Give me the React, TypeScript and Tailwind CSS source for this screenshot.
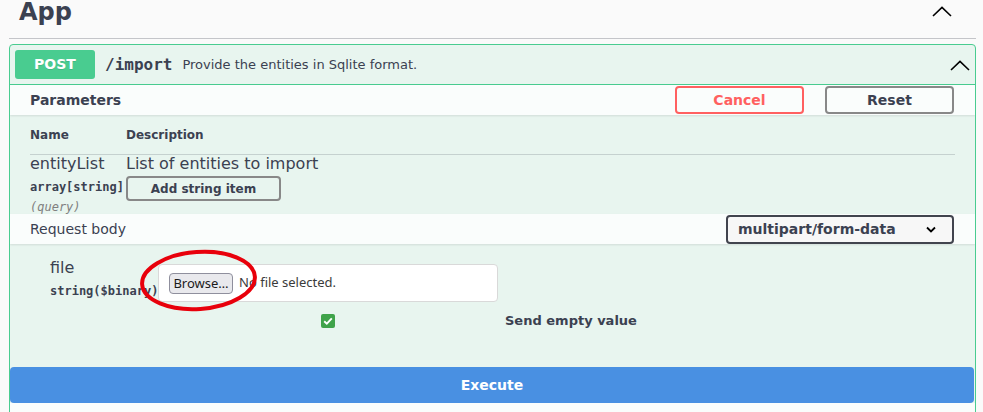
import React from "react";

const Chevron = ({ className = "" }: { className?: string }) => (
  <svg width="20" height="11" viewBox="0 0 20 11" className={className}>
    <polyline points="1,10 10,1.3 19,10" fill="none" stroke="#000" strokeWidth="1.6" />
  </svg>
);

export default function App() {
  return (
    <div className="relative h-[412px] overflow-hidden bg-[#fafafa] font-['DejaVu_Sans',sans-serif] text-[#3b4151]">
      <div className="ml-[9px] w-[967px] flex flex-col">
        {/* Tag header */}
        <div className="h-[39px] border-b border-[#c4c5c9] flex items-start pl-[10px] pr-[24px]">
          <div className="text-[24px] leading-[24px] font-bold">App</div>
          <Chevron className="ml-auto mt-[6px]" />
        </div>

        {/* Opblock */}
        <div className="mt-[5px] flex flex-col border border-[#49cc90] rounded-[4px] bg-[#e8f5ef] overflow-hidden">
          {/* Summary */}
          <div className="h-[40px] border-b border-[#49cc90] flex items-center pl-[5px] pr-[5px]">
            <div className="w-[80px] h-[29px] rounded-[3px] bg-[#49cc90] text-white font-bold text-[14px] flex items-center justify-center [text-shadow:0_1px_0_rgba(0,0,0,0.1)]">
              POST
            </div>
            <div className="ml-[10px] font-['DejaVu_Sans_Mono',monospace] font-bold text-[16px]">/import</div>
            <div className="ml-[10px] text-[13px]">Provide the entities in Sqlite format.</div>
            <Chevron className="ml-auto mt-[1px]" />
          </div>

          {/* Parameters header */}
          <div className="relative z-10 h-[30px] bg-[#fafdfc] shadow-[0_1px_2px_rgba(0,0,0,0.1)] flex items-center pl-[20px] pr-[21px]">
            <div className="font-bold text-[14px] leading-[16px] -mt-[1px]">Parameters</div>
            <button className="ml-auto w-[129px] h-[28px] border-2 border-[#ff6060] rounded-[4px] text-[#ff6060] font-bold text-[14px] bg-transparent">
              Cancel
            </button>
            <button className="ml-[21px] w-[129px] h-[28px] border-2 border-[#888] rounded-[4px] text-[#3b4151] font-bold text-[14px] bg-transparent">
              Reset
            </button>
          </div>

          {/* Parameters table */}
          <div className="h-[99px] px-[20px]">
            <div className="h-[40px] flex items-center border-b border-[rgba(59,65,81,0.2)] text-[12px] font-bold">
              <div className="w-[96px]">Name</div>
              <div>Description</div>
            </div>
            <div className="flex">
              <div className="w-[96px] flex flex-col">
                <div className="text-[16px] leading-[18px]">entityList</div>
                <div className="mt-[4px] font-['DejaVu_Sans_Mono',monospace] font-bold text-[12px] leading-[20px] whitespace-nowrap">
                  array[string]
                </div>
                <div className="mt-[3px] font-['DejaVu_Sans_Mono',monospace] italic text-[12px] leading-[14px] text-[#808080]">
                  (query)
                </div>
              </div>
              <div className="flex flex-col items-start">
                <div className="text-[16px] leading-[18px]">List of entities to import</div>
                <button className="mt-[3px] w-[155px] h-[25px] border-2 border-[#888] rounded-[4px] font-bold text-[12px] text-[#3b4151] bg-transparent">
                  Add string item
                </button>
              </div>
            </div>
          </div>

          {/* Request body header */}
          <div className="relative z-10 h-[30px] bg-[#fafdfc] shadow-[0_1px_2px_rgba(0,0,0,0.1)] flex items-center pl-[20px] pr-[21px]">
            <div className="text-[14px]">Request body</div>
            <div className="ml-auto w-[228px] h-[29px] border-2 border-[#41444e] rounded-[4px] bg-[#f7f7f7] flex items-center pl-[10px] pr-[16px]">
              <span className="font-bold text-[14px]">multipart/form-data</span>
              <svg width="10" height="7" viewBox="0 0 10 7" className="ml-auto">
                <polyline points="1,1.5 5,5.5 9,1.5" fill="none" stroke="#000" strokeWidth="1.8" />
              </svg>
            </div>
          </div>

          {/* Body */}
          <div className="pt-[15px]">
            <div className="flex pl-[40px]">
              <div className="w-[108px] flex flex-col">
                <div className="text-[16px] leading-[18px]">file</div>
                <div className="mt-[7px] font-['DejaVu_Sans_Mono',monospace] font-bold text-[12px] leading-[14px] whitespace-nowrap">
                  string($binary)
                </div>
              </div>
              <div className="relative mt-[5px] w-[340px] h-[38px] bg-white border border-[#d9d9d9] rounded-[4px] flex items-center pl-[10px] font-['Noto_Sans',sans-serif] text-[13px] text-[#1b1b1b]">
                <button className="w-[64px] h-[21px] border border-[#8f8f9d] bg-[#e9e9ed] rounded-[4px] text-[13px] leading-[19px] text-[#1b1b1b] font-['Noto_Sans',sans-serif]">
                  Browse…
                </button>
                <span className="ml-[6px] text-[#3b3b3b]">No file selected.</span>
              </div>
            </div>
            <div className="mt-[12px] h-[14px] flex items-center pl-[311px]">
              <div className="w-[14px] h-[14px] rounded-[2px] bg-[#3fa34a] flex items-center justify-center">
                <svg width="10" height="8" viewBox="0 0 10 8">
                  <polyline points="1.2,4.2 3.8,6.6 8.8,1.4" fill="none" stroke="#fff" strokeWidth="1.9" />
                </svg>
              </div>
              <div className="ml-[170px] font-bold text-[13px] leading-[14px]">Send empty value</div>
            </div>
          </div>

          {/* Execute */}
          <div className="mt-[39px] mr-[1px]">
            <button className="w-full h-[36px] bg-[#4990e2] rounded-[4px] text-white font-bold text-[14px]">Execute</button>
          </div>
          <div className="h-[60px] bg-[#fafdfc]" />
        </div>
      </div>

      {/* Red annotation ellipse */}
      <svg width="121" height="65" viewBox="0 0 121 65" className="absolute left-[138px] top-[248px] pointer-events-none">
        <ellipse cx="60.5" cy="32.5" rx="56.5" ry="28.5" fill="none" stroke="#e8000b" strokeWidth="4" transform="rotate(-4 60.5 32.5)" />
      </svg>
    </div>
  );
}
